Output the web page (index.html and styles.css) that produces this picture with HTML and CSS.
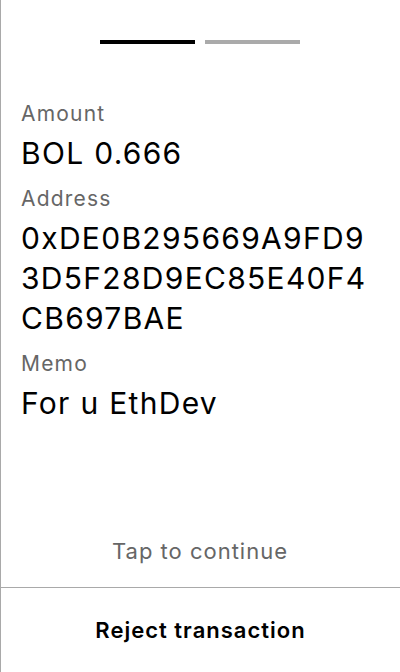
FILE: index.html
```html
<!DOCTYPE html>
<html>
<head>
<meta charset="utf-8">
<link rel="stylesheet" href="styles.css">
</head>
<body>
<div class="screen">
  <div class="progress">
    <span class="bar bar-active"></span>
    <span class="bar"></span>
  </div>
  <div class="details">
    <div class="field">
      <div class="label">Amount</div>
      <div class="value">BOL 0.666</div>
    </div>
    <div class="field">
      <div class="label">Address</div>
      <div class="value">0xDE0B295669A9FD93D5F28D9EC85E40F4CB697BAE</div>
    </div>
    <div class="field">
      <div class="label">Memo</div>
      <div class="value">For u EthDev</div>
    </div>
  </div>
  <div class="hint">Tap to continue</div>
  <div class="reject">Reject transaction</div>
</div>
</body>
</html>
```
FILE: styles.css
```css
html, body {
  margin: 0;
  padding: 0;
  background: #fff;
}
.screen {
  box-sizing: border-box;
  width: 400px;
  height: 672px;
  border-left: 1px solid #a9a9a9;
  display: flex;
  flex-direction: column;
  font-family: Inter, "Noto Sans", sans-serif;
  color: #000;
}
.progress {
  display: flex;
  justify-content: center;
  gap: 10px;
  padding-top: 40px;
  margin-left: -1px;
}
.bar {
  width: 95px;
  height: 4px;
  background: #aaaaaa;
}
.bar-active {
  background: #000;
}
.details {
  padding: 56px 20px 0 20px;
  flex: 1;
  display: flex;
  flex-direction: column;
  gap: 12px;
}
.label {
  font-size: 21px;
  line-height: 28px;
  letter-spacing: 1.2px;
  color: #666;
}
.value {
  font-size: 30px;
  line-height: 40px;
  letter-spacing: 1.3px;
  word-break: break-all;
  margin-top: 5px;
}
.hint {
  text-align: center;
  font-size: 22px;
  line-height: 28px;
  letter-spacing: 1px;
  color: #666;
  margin-bottom: 22px;
  margin-left: -1px;
}
.reject {
  border-top: 1px solid #a9a9a9;
  height: 84px;
  display: flex;
  align-items: center;
  justify-content: center;
  font-size: 22px;
  font-weight: 600;
  letter-spacing: 1px;
  margin-left: -1px;
  padding-left: 1px;
}
```
